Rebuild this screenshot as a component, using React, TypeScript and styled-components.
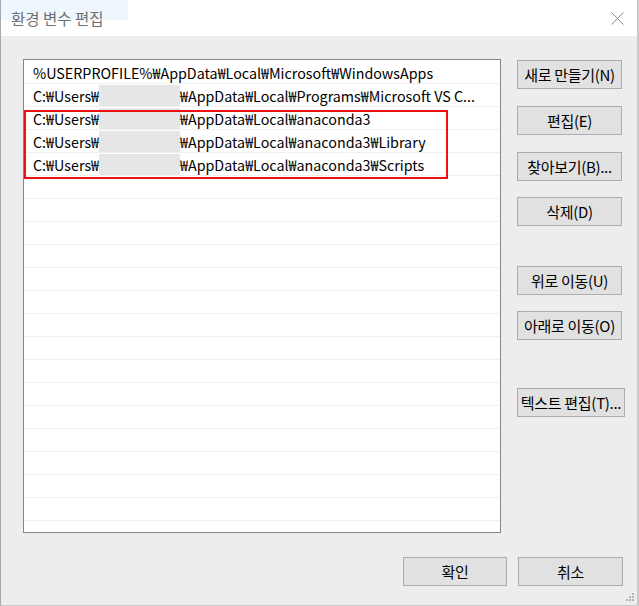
import React from "react";
import styled, { createGlobalStyle } from "styled-components";

const Global = createGlobalStyle`
  html, body { margin: 0; padding: 0; background: #ffffff; }
  body { font-family: "Noto Sans CJK KR", "Noto Sans", sans-serif; }
  * { box-sizing: border-box; }
`;

const Window = styled.div`
  width: 639px;
  height: 606px;
  display: flex;
  flex-direction: column;
  border-left: 1px solid #a9a9a9;
  border-right: 2px solid #c9c9c9;
  border-bottom: 1px solid #c9c9c9;
  background: #ededed;
  position: relative;
  overflow: hidden;
`;

const TitleBar = styled.div`
  height: 36px;
  flex: none;
  background: #ffffff;
  display: flex;
  align-items: center;
  justify-content: space-between;
  padding: 0 10px 0 10px;
  position: relative;
`;

const Tint = styled.div`
  position: absolute;
  left: 0;
  top: 0;
  width: 127px;
  height: 20px;
  background: #eef7fd;
`;

const Title = styled.span`
  position: relative;
  font-size: 15.5px;
  color: #707070;
  margin-top: -1px;
`;

const Close = styled.svg`
  width: 13px;
  height: 13px;
  margin-right: 3px;
`;

const Body = styled.div`
  flex: 1;
  display: flex;
  flex-direction: column;
  padding: 23px 0 0 22px;
`;

const Main = styled.div`
  display: flex;
  gap: 16px;
`;

const ListBox = styled.div`
  width: 478px;
  height: 474px;
  background: #ffffff;
  border: 1px solid #82878f;
  position: relative;
  display: flex;
  flex-direction: column;
  padding-top: 1px;
  overflow: hidden;
`;

const Row = styled.div`
  height: 23px;
  flex: none;
  border-bottom: 1px solid #f0f0f0;
  display: flex;
  align-items: center;
  padding-left: 9px;
  font-size: 14.3px;
  color: #000;
  white-space: nowrap;
`;

const Redact = styled.span`
  display: inline-block;
  width: 81px;
  height: 21px;
  background: #e6e6e6;
`;

const Highlight = styled.div`
  position: absolute;
  left: 0;
  top: 50px;
  width: 424px;
  height: 69px;
  border: 2px solid #ee1111;
`;

const Side = styled.div`
  display: flex;
  flex-direction: column;
  padding-top: 1px;
`;

const Button = styled.button<{ $top?: number; $w?: number }>`
  width: ${(p) => p.$w ?? 105}px;
  height: 29px;
  margin-top: ${(p) => p.$top ?? 0}px;
  background: #e1e1e1;
  border: 1px solid #adadad;
  font-family: "Noto Sans CJK KR", "Noto Sans", sans-serif;
  font-size: 15px;
  color: #000;
  padding: 0;
  display: flex;
  align-items: center;
  justify-content: center;
  white-space: nowrap;
  letter-spacing: -0.3px;
`;

const Footer = styled.div`
  display: flex;
  justify-content: flex-end;
  gap: 11px;
  padding: 24px 14px 0 0;
`;

const Grip = styled.svg`
  position: absolute;
  right: 3px;
  bottom: 2px;
  width: 10px;
  height: 10px;
`;

const paths = [
  { pre: "%USERPROFILE%₩AppData₩Local₩Microsoft₩WindowsApps" },
  { pre: "C:₩Users₩", post: "₩AppData₩Local₩Programs₩Microsoft VS C..." },
  { pre: "C:₩Users₩", post: "₩AppData₩Local₩anaconda3" },
  { pre: "C:₩Users₩", post: "₩AppData₩Local₩anaconda3₩Library" },
  { pre: "C:₩Users₩", post: "₩AppData₩Local₩anaconda3₩Scripts" },
];

export default function App() {
  const empty = Array.from({ length: 15 });
  return (
    <>
      <Global />
      <Window>
        <TitleBar>
          <Tint />
          <Title>환경 변수 편집</Title>
          <Close viewBox="0 0 13 13">
            <path d="M0.5 0.5 L12.5 12.5 M12.5 0.5 L0.5 12.5" stroke="#8a8a8a" strokeWidth="1" fill="none" />
          </Close>
        </TitleBar>
        <Body>
          <Main>
            <ListBox>
              {paths.map((p, i) => (
                <Row key={i}>
                  {p.pre}
                  {p.post !== undefined && (
                    <>
                      <Redact />
                      {p.post}
                    </>
                  )}
                </Row>
              ))}
              {empty.map((_, i) => (
                <Row key={"e" + i} />
              ))}
              <Highlight />
            </ListBox>
            <Side>
              <Button>새로 만들기(N)</Button>
              <Button $top={17}>편집(E)</Button>
              <Button $top={17}>찾아보기(B)...</Button>
              <Button $top={16}>삭제(D)</Button>
              <Button $top={40}>위로 이동(U)</Button>
              <Button $top={16}>아래로 이동(O)</Button>
              <Button $top={48} $w={108}>텍스트 편집(T)...</Button>
            </Side>
          </Main>
          <Footer>
            <Button $w={104}>확인</Button>
            <Button>취소</Button>
          </Footer>
        </Body>
        <Grip viewBox="0 0 10 10">
          <rect x="8" y="0" width="2" height="2" fill="#b5b5b5" />
          <rect x="5" y="3" width="2" height="2" fill="#b5b5b5" />
          <rect x="8" y="3" width="2" height="2" fill="#b5b5b5" />
          <rect x="2" y="6" width="2" height="2" fill="#b5b5b5" />
          <rect x="5" y="6" width="2" height="2" fill="#b5b5b5" />
          <rect x="8" y="6" width="2" height="2" fill="#b5b5b5" />
        </Grip>
      </Window>
    </>
  );
}
